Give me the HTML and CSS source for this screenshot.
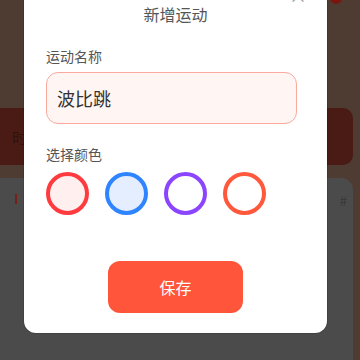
FILE: index.html
```html
<!DOCTYPE html>
<html lang="zh-CN">
<head>
    <meta charset="UTF-8">
    <meta name="viewport" content="width=device-width, initial-scale=1.0">
    <title>新增运动</title>
    <link rel="stylesheet" href="styles.css">
</head>
<body>
    <div class="page">
        <span class="dot"></span>
        <div class="banner">时</div>
        <div class="list-card">
            <span class="mark"></span>
            <span class="hash">#</span>
        </div>
    </div>
    <div class="modal">
        <span class="close">×</span>
        <div class="title">新增运动</div>
        <div class="label">运动名称</div>
        <div class="input">波比跳</div>
        <div class="label label-color">选择颜色</div>
        <div class="colors">
            <span class="swatch red"></span>
            <span class="swatch blue"></span>
            <span class="swatch purple"></span>
            <span class="swatch orange"></span>
        </div>
        <div class="actions">
            <button class="save">保存</button>
        </div>
    </div>
</body>
</html>
```

FILE: styles.css
```css
body {
    margin: 0;
    width: 360px;
    height: 360px;
    overflow: hidden;
    position: relative;
    background-color: #4e3c32;
    font-family: "Noto Sans CJK SC", "Noto Sans", sans-serif;
}
.page {
    padding-top: 108px;
    padding-right: 7px;
}
.dot {
    position: absolute;
    left: 330px;
    top: -8px;
    width: 12px;
    height: 12px;
    border-radius: 50%;
    background-color: #7a1610;
}
.banner {
    height: 57px;
    border-radius: 0 10px 10px 0;
    background-color: #4a1b14;
    display: flex;
    align-items: center;
    padding-left: 12px;
    color: #2a1410;
    font-size: 15px;
}
.list-card {
    margin-top: 13px;
    height: 182px;
    box-sizing: border-box;
    border-radius: 0 12px 0 0;
    background-color: #4b4b4b;
    display: flex;
    justify-content: space-between;
    padding: 16px 18px 0 15px;
}
.mark {
    width: 2px;
    height: 10px;
    background-color: #7a1e1a;
}
.hash {
    color: #383838;
    font-size: 13px;
    line-height: 14px;
    margin-right: -12px;
}
.modal {
    position: absolute;
    left: 24px;
    top: -12px;
    width: 303px;
    height: 345px;
    box-sizing: border-box;
    padding: 0 22px;
    background-color: #fff;
    border-radius: 12px;
    box-shadow: 0 0 0 1px rgba(0, 0, 0, 0.12);
}
.close {
    position: absolute;
    right: 20px;
    top: -2px;
    color: #999;
    font-size: 18px;
    line-height: 18px;
}
.title {
    margin-top: 15px;
    line-height: 22px;
    text-align: center;
    font-size: 16px;
    color: #555;
}
.label {
    margin-top: 21px;
    line-height: 20px;
    font-size: 14px;
    color: #555;
}
.label-color {
    margin-top: 20px;
}
.input {
    margin-top: 6px;
    width: 251px;
    height: 52px;
    box-sizing: border-box;
    border: 1.5px solid #f9a99e;
    border-radius: 12px;
    background-color: #fff6f4;
    display: flex;
    align-items: center;
    padding-left: 10px;
    font-size: 18px;
    color: #333;
}
.colors {
    margin-top: 8px;
    display: flex;
    gap: 16px;
}
.swatch {
    width: 43px;
    height: 43px;
    box-sizing: border-box;
    border-radius: 50%;
    border: 4px solid;
    background-color: #fff;
}
.swatch.red {
    border-color: #ff3b3f;
    background-color: #ffefef;
}
.swatch.blue {
    border-color: #2f84ff;
    background-color: #e4eeff;
}
.swatch.purple {
    border-color: #8b45ff;
}
.swatch.orange {
    border-color: #ff583c;
}
.actions {
    margin-top: 46px;
    display: flex;
    justify-content: center;
}
.save {
    width: 135px;
    height: 52px;
    border: none;
    border-radius: 12px;
    background-color: #ff563b;
    color: #fff;
    font-family: inherit;
    font-size: 16px;
}
```
